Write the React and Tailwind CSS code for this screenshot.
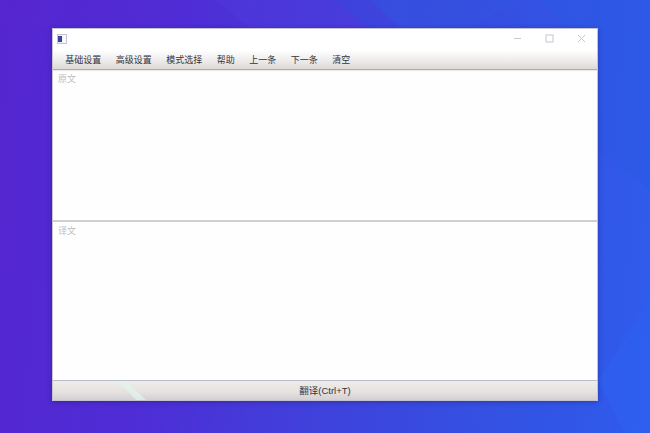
import React from 'react';

const menus = ['基础设置', '高级设置', '模式选择', '帮助', '上一条', '下一条', '清空'];

const fontStack = "font-['Liberation_Sans','Noto_Sans_CJK_SC',sans-serif]";

const App = () => {
  return (
    <div className={`relative w-[650px] h-[433px] overflow-hidden pt-[28px] pl-[52px] bg-[linear-gradient(95deg,#5526d0_0%,#4e2dd6_25%,#3f42dc_52%,#3450e2_75%,#2f5cec_100%)] ${fontStack}`}>
      {/* wallpaper facets */}
      <svg className="absolute inset-0" width="650" height="433" viewBox="0 0 650 433">
        <path d="M0 0H215L250 28H0Z" fill="#5c2ad4" opacity="0.2" />
        <path d="M215 0H330L370 28H250Z" fill="#5236dc" opacity="0.5" />
        <path d="M370 0H520L470 28H400Z" fill="#3454e0" opacity="0.6" />
        <path d="M598 150L650 190V0H540L598 60Z" fill="#2c57e4" opacity="0.5" />
        <path d="M598 380L625 433H650V300Z" fill="#2f60f0" opacity="0.6" />
      </svg>

      <div className="relative w-[546px] h-[373px] flex flex-col bg-[#fefefe] border border-[#c6c3d0] shadow-[0_1px_5px_rgba(30,20,90,0.4)]">
        {/* title bar */}
        <div className="h-[22px] flex items-center justify-between shrink-0 bg-white">
          <svg className="ml-[4px] mb-[2px]" width="10" height="10" viewBox="0 0 10 10">
            <rect x="0.5" y="0.5" width="9" height="9" fill="#eeeef4" stroke="#c4c4d2" />
            <rect x="1" y="2" width="4" height="6" fill="#3a469e" />
            <rect x="6" y="1" width="3" height="8" fill="#fafafc" />
          </svg>
          <div className="flex items-center mb-[3px]">
            <div className="w-[32px] flex justify-center">
              <svg width="9" height="9" viewBox="0 0 9 9">
                <path d="M1 4.5H8" stroke="#c9c9d6" strokeWidth="1" />
              </svg>
            </div>
            <div className="w-[32px] flex justify-center">
              <svg width="9" height="9" viewBox="0 0 9 9">
                <rect x="1" y="1" width="7" height="7" fill="none" stroke="#c4c6d6" strokeWidth="1" />
              </svg>
            </div>
            <div className="w-[32px] flex justify-center">
              <svg width="9" height="9" viewBox="0 0 9 9">
                <path d="M1 1L8 8M8 1L1 8" stroke="#c4c6d6" strokeWidth="1" />
              </svg>
            </div>
          </div>
        </div>

        {/* menu bar */}
        <div className="h-[19px] shrink-0 flex items-center pl-[5px] border-b border-[#b5a9b8] bg-[linear-gradient(180deg,#fdfdfd_0%,#f1efee_45%,#dcd8d5_100%)]">
          {menus.map(m => (
            <span key={m} className="px-[7.25px] text-[9px] leading-none text-[#36323c]">
              {m}
            </span>
          ))}
        </div>

        {/* source */}
        <div className="h-[150px] shrink-0 px-[5px] pt-[3px] text-[9px] leading-[12px] text-[#bdbdbd] shadow-[inset_0_1px_1px_rgba(180,175,185,0.3)]">
          原文
        </div>
        <div className="h-[2px] shrink-0 bg-[#d2cdd1]" />

        {/* translation */}
        <div className="flex-1 px-[5px] pt-[3px] text-[9px] leading-[12px] text-[#bdbdbd]">
          译文
        </div>

        {/* translate button */}
        <div className="relative h-[20px] shrink-0 flex items-center justify-center border-t border-[#bcbcc8] bg-[linear-gradient(180deg,#efedea_0%,#e4e1de_60%,#d3cfd4_100%)] text-[9.5px] leading-none text-[#36323c]">
          <svg className="absolute left-[65px] top-0" width="30" height="19" viewBox="0 0 30 19">
            <path d="M0 0H8L28 19H18Z" fill="#dff3ee" opacity="0.7" />
          </svg>
          <span className="relative">翻译(Ctrl+T)</span>
        </div>
      </div>
    </div>
  );
};

export default App;
